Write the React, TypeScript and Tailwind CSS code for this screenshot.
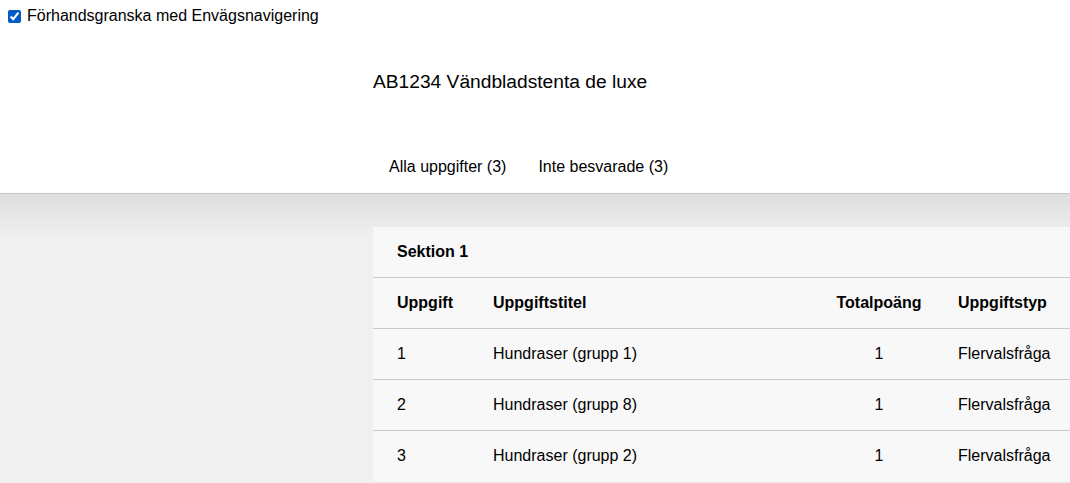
import React from "react";

const rows = [
  { n: "1", title: "Hundraser (grupp 1)", pts: "1", type: "Flervalsfråga" },
  { n: "2", title: "Hundraser (grupp 8)", pts: "1", type: "Flervalsfråga" },
  { n: "3", title: "Hundraser (grupp 2)", pts: "1", type: "Flervalsfråga" },
];

export default function App() {
  return (
    <div className="h-[483px] w-[1070px] overflow-hidden font-['Liberation_Sans',Arial,sans-serif] text-black bg-[#f0f0f0]">
      <header className="bg-white border-b border-[#c8c8c8] h-[194px]">
        <label className="h-[32px] flex items-center pl-2 gap-[6px] text-[16px] leading-[18px]">
          <input type="checkbox" defaultChecked className="w-[13px] h-[13px] m-0 accent-[#0075ff]" />
          <span>Förhandsgranska med Envägsnavigering</span>
        </label>
        <div className="h-[100px] flex items-center pl-[373px]">
          <h1 className="text-[19.2px] leading-[24px] font-normal">AB1234 Vändbladstenta de luxe</h1>
        </div>
        <nav className="mt-[8px] h-[53px] flex items-center pl-[373px] text-[16px] leading-[20px]">
          <span className="px-4">Alla uppgifter (3)</span>
          <span className="px-4">Inte besvarade (3)</span>
        </nav>
      </header>
      <main className="h-[289px] bg-[linear-gradient(#dedede,#f0f0f0_45px)] pt-[33px] pl-[373px]">
        <div className="w-[710px] bg-[#f8f8f8] text-[16px] leading-[20px]">
          <div className="h-[51px] flex items-center px-6 font-bold border-b border-[#cbcbcb]">Sektion 1</div>
          <div className="h-[51px] flex items-center font-bold border-b border-[#cbcbcb]">
            <div className="w-[96px] pl-6">Uppgift</div>
            <div className="w-[355px] pl-6">Uppgiftstitel</div>
            <div className="w-[110px] text-center">Totalpoäng</div>
            <div className="flex-1 pl-6">Uppgiftstyp</div>
          </div>
          {rows.map((r, i) => (
            <div
              key={r.n}
              className={
                i < rows.length - 1
                  ? "h-[51px] flex items-center border-b border-[#cbcbcb]"
                  : "h-[50px] flex items-center"
              }
            >
              <div className="w-[96px] pl-6">{r.n}</div>
              <div className="w-[355px] pl-6">{r.title}</div>
              <div className="w-[110px] text-center">{r.pts}</div>
              <div className="flex-1 pl-6">{r.type}</div>
            </div>
          ))}
        </div>
      </main>
    </div>
  );
}
